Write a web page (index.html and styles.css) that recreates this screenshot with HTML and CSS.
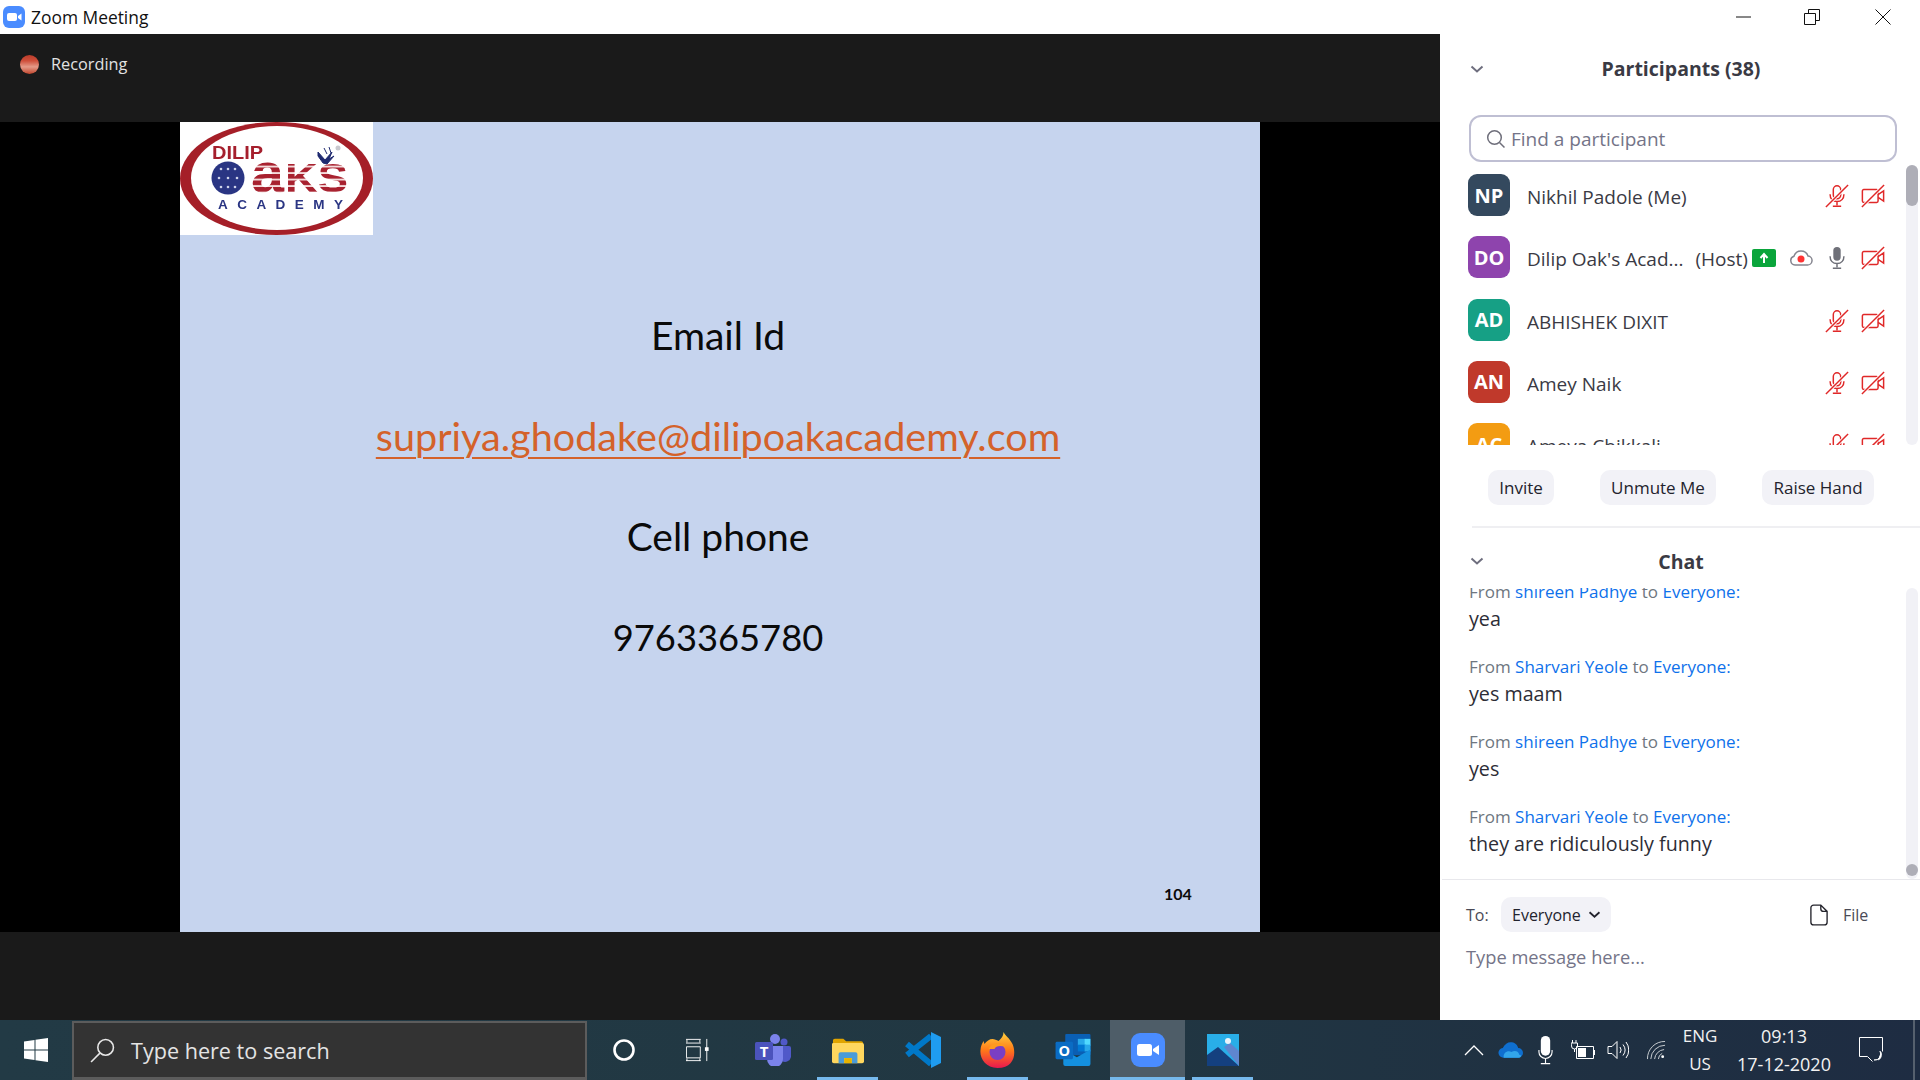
FILE: index.html
```html
<!DOCTYPE html>
<html lang="en">
<head>
<meta charset="utf-8">
<title>Zoom Meeting</title>
<link rel="stylesheet" href="styles.css">
</head>
<body>
<svg class="sprite" width="0" height="0" aria-hidden="true">
  <symbol id="mic-off" viewBox="0 0 26 26">
    <rect x="9" y="2" width="8" height="14" rx="4" fill="none" stroke="currentColor" stroke-width="1.6"/>
    <path d="M5.5 11c0 5 3 8 7.500 8s7.500-3 7.500-8M13 19v4M8.500 24h9" fill="none" stroke="currentColor" stroke-width="1.600"/>
    <path d="M1 25L25 1" stroke="#fff" stroke-width="3.500"/>
    <path d="M1 25L25 1" stroke="currentColor" stroke-width="1.600"/>
  </symbol>
  <symbol id="cam-off" viewBox="0 0 26 26">
    <path d="M3 6h14a1.500 1.500 0 0 1 1.500 1.500v11A1.500 1.500 0 0 1 17 20H3a1.500 1.500 0 0 1-1.500-1.500v-11A1.500 1.500 0 0 1 3 6z" fill="none" stroke="currentColor" stroke-width="1.600"/>
    <path d="M18.500 11.500l6-4v11l-6-4" fill="none" stroke="currentColor" stroke-width="1.600"/>
    <path d="M1 25L25 1" stroke="#fff" stroke-width="3.500"/>
    <path d="M1 25L25 1" stroke="currentColor" stroke-width="1.600"/>
  </symbol>
  <symbol id="chev" viewBox="0 0 14 10">
    <path d="M1.500 2.500L7 7.500l5.500-5" fill="none" stroke="currentColor" stroke-width="2"/>
  </symbol>
</svg>

<header class="titlebar">
  <svg class="app-icon" viewBox="0 0 22 22"><rect width="22" height="22" rx="6" fill="#4a8cff"/><rect x="4" y="7" width="10" height="8" rx="2" fill="#fff"/><path d="M15 10l3.500-2.500v7L15 12z" fill="#fff"/></svg>
  <span class="app-title">Zoom Meeting</span>
  <div class="win-controls">
    <svg class="win-btn" viewBox="0 0 16 16"><path d="M0 8h15" stroke="#111" fill="none"/></svg>
    <svg class="win-btn win-restore" viewBox="0 0 16 16"><path d="M.500 4.500h11v11H.500zM4.500 4V.500h11v11H12" stroke="#111" fill="none"/></svg>
    <svg class="win-btn" viewBox="0 0 16 16"><path d="M.500.500l15 15M15.500.500l-15 15" stroke="#111" fill="none"/></svg>
  </div>
</header>

<main class="app">
  <section class="stage">
    <div class="stage-top">
      <span class="rec-dot"></span>
      <span class="rec-label">Recording</span>
    </div>
    <div class="screen">
      <div class="slide">
        <svg class="logo" viewBox="0 0 193 113">
          <defs>
            <pattern id="stripes" width="10" height="6.500" patternUnits="userSpaceOnUse">
              <rect width="10" height="6.500" fill="#a8212f"/>
              <rect y="4.600" width="10" height="1.900" fill="#f4dcdc"/>
            </pattern>
          </defs>
          <rect width="193" height="113" fill="#fff"/>
          <ellipse cx="96.500" cy="56.500" rx="96.500" ry="56.500" fill="#a51f28"/>
          <ellipse cx="97" cy="56" rx="86" ry="52" fill="#fff"/>
          <text x="32" y="37" class="logo-dilip" textLength="51" lengthAdjust="spacingAndGlyphs">DILIP</text>
          <circle cx="48" cy="56" r="16.500" fill="#2a3583"/>
          <g fill="#cfd3ea">
            <circle cx="41" cy="47" r="1.300"/><circle cx="48" cy="47" r="1.300"/><circle cx="55" cy="47" r="1.300"/>
            <circle cx="39" cy="56" r="1.300"/><circle cx="48" cy="56" r="1.300"/><circle cx="57" cy="56" r="1.300"/>
            <circle cx="41" cy="65" r="1.300"/><circle cx="48" cy="65" r="1.300"/><circle cx="55" cy="65" r="1.300"/>
          </g>
          <text x="71" y="70" class="logo-a" textLength="33" lengthAdjust="spacingAndGlyphs">a</text>
          <text x="105" y="70" class="logo-ks" textLength="63" lengthAdjust="spacingAndGlyphs">KS</text>
          <path d="M138 30l7 8 7-8-3 7 5-3-7 8-4-1-5-7zM144 26l3 6M149 25l2 6" fill="#1f2a70" stroke="#1f2a70"/>
          <circle cx="158" cy="26" r="2.500" fill="#c9c9cf"/>
          <text x="38" y="86.500" class="logo-academy" textLength="125">ACADEMY</text>
        </svg>
        <p class="slide-line">Email Id</p>
        <p class="slide-line slide-link">supriya.ghodake@dilipoakacademy.com</p>
        <p class="slide-line">Cell phone</p>
        <p class="slide-line slide-num">9763365780</p>
        <span class="slide-no">104</span>
      </div>
    </div>
    <div class="stage-bottom"></div>
  </section>

  <aside class="panel">
    <div class="panel-head participants-head">
      <svg class="chev"><use href="#chev"/></svg>
      <span class="panel-title">Participants (38)</span>
    </div>
    <div class="search">
      <svg class="search-icon" viewBox="0 0 20 20"><circle cx="8.500" cy="8.500" r="6.800" fill="none" stroke="#6e6e7a" stroke-width="1.500"/><path d="M13.500 13.500l5 5" stroke="#6e6e7a" stroke-width="1.500"/></svg>
      <span class="search-text">Find a participant</span>
    </div>
    <div class="list">
      <div class="rows">
        <div class="row">
          <span class="avatar av-np">NP</span><span class="name">Nikhil Padole (Me)</span>
          <span class="row-icons"><svg class="ico red"><use href="#mic-off"/></svg><svg class="ico red"><use href="#cam-off"/></svg></span>
        </div>
        <div class="row">
          <span class="avatar av-do">DO</span><span class="name">Dilip Oak's Acad...<span class="host">(Host)</span></span>
          <span class="row-icons">
            <svg class="share" viewBox="0 0 24 18"><rect width="24" height="18" rx="2" fill="#0aa53b"/><path d="M12 14V6M8.500 9L12 5l3.500 4" fill="none" stroke="#fff" stroke-width="2"/></svg>
            <svg class="cloud" viewBox="0 0 24 16"><path d="M6 15a4.500 4.500 0 0 1-1-8.800C6 3 9 1 12 1c3.500 0 6 2 7 5a4.500 4.500 0 0 1-1 9z" fill="none" stroke="#85858f" stroke-width="1.500"/><circle cx="12" cy="9" r="3.500" fill="#f33"/></svg>
            <svg class="ico grey" viewBox="0 0 26 26"><rect x="9" y="1" width="8" height="15" rx="4" fill="currentColor"/><path d="M5.500 11c0 5 3 8 7.500 8s7.500-3 7.500-8M13 19v4M8.500 24h9" fill="none" stroke="currentColor" stroke-width="1.600"/></svg>
            <svg class="ico red"><use href="#cam-off"/></svg>
          </span>
        </div>
        <div class="row">
          <span class="avatar av-ad">AD</span><span class="name">ABHISHEK DIXIT</span>
          <span class="row-icons"><svg class="ico red"><use href="#mic-off"/></svg><svg class="ico red"><use href="#cam-off"/></svg></span>
        </div>
        <div class="row">
          <span class="avatar av-an">AN</span><span class="name">Amey Naik</span>
          <span class="row-icons"><svg class="ico red"><use href="#mic-off"/></svg><svg class="ico red"><use href="#cam-off"/></svg></span>
        </div>
        <div class="row">
          <span class="avatar av-ac">AC</span><span class="name">Ameya Chikkali</span>
          <span class="row-icons"><svg class="ico red"><use href="#mic-off"/></svg><svg class="ico red"><use href="#cam-off"/></svg></span>
        </div>
      </div>
      <div class="track"><div class="thumb thumb-list"></div></div>
    </div>
    <div class="actions">
      <button class="btn btn-invite">Invite</button>
      <button class="btn btn-unmute">Unmute Me</button>
      <button class="btn btn-raise">Raise Hand</button>
    </div>
    <div class="divider"></div>
    <div class="panel-head chat-head">
      <svg class="chev"><use href="#chev"/></svg>
      <span class="panel-title">Chat</span>
    </div>
    <div class="chat">
      <div class="messages">
        <div class="msg"><div class="from">From <a>shireen Padhye</a> to <a>Everyone:</a></div><div class="body">yea</div></div>
        <div class="msg"><div class="from">From <a>Sharvari Yeole</a> to <a>Everyone:</a></div><div class="body">yes maam</div></div>
        <div class="msg"><div class="from">From <a>shireen Padhye</a> to <a>Everyone:</a></div><div class="body">yes</div></div>
        <div class="msg"><div class="from">From <a>Sharvari Yeole</a> to <a>Everyone:</a></div><div class="body">they are ridiculously funny</div></div>
      </div>
      <div class="track"><div class="thumb thumb-chat"></div></div>
    </div>
    <div class="divider-full"></div>
    <div class="compose">
      <div class="to-row">
        <span class="to">To:</span>
        <span class="pill">Everyone<svg class="pill-chev"><use href="#chev"/></svg></span>
        <span class="file">
          <svg class="file-icon" viewBox="0 0 20 24"><path d="M4 1h8l7 7v12a3 3 0 0 1-3 3H4a3 3 0 0 1-3-3V4a3 3 0 0 1 3-3zM12 1v4a3 3 0 0 0 3 3h4" fill="none" stroke="#24242c" stroke-width="1.500"/></svg>
          File
        </span>
      </div>
      <div class="type">Type message here...</div>
    </div>
  </aside>
</main>

<footer class="taskbar">
  <div class="start">
    <svg class="win-logo" viewBox="0 0 24 24"><path d="M0 3.500l10.500-1.500v9.500H0zM11.500 1.800L24 0v11.500H11.500zM0 12.500h10.500V22L0 20.500zM11.500 12.500H24V24l-12.500-1.800z" fill="#fff"/></svg>
  </div>
  <div class="tb-search">
    <svg class="tb-search-icon" viewBox="0 0 24 24"><circle cx="15" cy="9" r="7.500" fill="none" stroke="#e8e8e8" stroke-width="1.500"/><path d="M9.500 14.500L1 23" stroke="#e8e8e8" stroke-width="1.500"/></svg>
    <span class="tb-search-text">Type here to search</span>
  </div>
  <div class="tb-apps">
    <div class="tb-app tb-cortana"><svg viewBox="0 0 24 24" class="tb-i"><circle cx="12" cy="12" r="9.500" fill="none" stroke="#fff" stroke-width="2.600"/></svg></div>
    <div class="tb-app"><svg viewBox="0 0 26 24" class="tb-i"><path d="M0 .500h16M0 4.500h16M1 4V1M15 4V1M.500 8.500h15v12H.500zM0 23.500h16M1 24v-3M15 24v-3M22.500 0v24" fill="none" stroke="#fff"/><rect x="20.500" y="9" width="4" height="4" fill="#fff"/></svg></div>
    <div class="tb-app"><svg viewBox="0 0 36 32" class="tb-l">
      <circle cx="29" cy="8" r="3.500" fill="#5059c9"/><path d="M24 12h10a2 2 0 0 1 2 2v9a6 6 0 0 1-9 4z" fill="#5059c9"/>
      <circle cx="20" cy="5" r="5" fill="#7b83eb"/><path d="M12 12h16v13a8 8 0 0 1-16 0z" fill="#7b83eb"/>
      <rect x="0" y="8" width="18" height="18" rx="1.500" fill="#4b53bc"/><text x="9" y="23" class="tb-letter" text-anchor="middle">T</text>
    </svg></div>
    <div class="tb-app tb-open"><svg viewBox="0 0 34 32" class="tb-folder" preserveAspectRatio="none">
      <path d="M1 4a2 2 0 0 1 2-2h9l3 3h16a2 2 0 0 1 2 2v3H1z" fill="#e0a400"/>
      <path d="M1 7h31a2 2 0 0 1 2 2v20a2 2 0 0 1-2 2H2a2 2 0 0 1-2-2V8z" fill="#ffd75e"/>
      <path d="M7 31V20a2 2 0 0 1 2-2h16a2 2 0 0 1 2 2v11h-6v-6h-8v6z" fill="#4a9bd8"/>
      <rect x="13" y="25" width="8" height="6" fill="#e8b300"/>
    </svg></div>
    <div class="tb-app"><svg viewBox="0 0 37 36" class="tb-xl">
      <path d="M27 4L3 23M3 12l24 20" fill="none" stroke="#0078c8" stroke-width="6"/>
      <path d="M27 0l10 5v26l-10 5z" fill="#1f9cf0"/>
    </svg></div>
    <div class="tb-app tb-open"><svg viewBox="0 0 36 36" class="tb-xl">
      <defs>
        <linearGradient id="fx" x1="0" y1="0" x2="0" y2="1"><stop offset="0" stop-color="#ffd23f"/><stop offset=".5" stop-color="#ff7a18"/><stop offset="1" stop-color="#e8174f"/></linearGradient>
      </defs>
      <path d="M24 0c2 4 6 6 9 12 4 9 2 24-15 24C6 36 0 26 1 18c0-4 2-7 3-9l1 3c2-3 5-5 8-5 2 0 4 1 6 2 3-3 5-5 5-9z" fill="url(#fx)"/>
      <circle cx="18" cy="20" r="8" fill="#7a3fc4"/>
      <path d="M9 17c3-6 12-9 17-2-5-2-10-1-11 2-3 0-4 0-6 0z" fill="#ff9a1f"/>
    </svg></div>
    <div class="tb-app"><svg viewBox="0 0 36 33" class="tb-l">
      <rect x="10" y="0" width="26" height="22" rx="1" fill="#0a5fb4"/>
      <rect x="23" y="5" width="8" height="7" fill="#28a8ea"/><rect x="30" y="5" width="6" height="7" fill="#50d9ff"/>
      <rect x="23" y="11" width="8" height="7" fill="#0078d4"/><rect x="30" y="11" width="6" height="7" fill="#28a8ea"/>
      <path d="M8 16l14 8 14-8v15a2 2 0 0 1-2 2H10a2 2 0 0 1-2-2z" fill="#1490df"/>
      <rect x="0" y="8" width="18" height="18" rx="1.500" fill="#0a6cc4"/><text x="9" y="22.500" class="tb-letter" text-anchor="middle">O</text>
    </svg></div>
    <div class="tb-app tb-active"><svg viewBox="0 0 34 34" class="tb-z"><rect width="34" height="34" rx="9" fill="#4a8cff"/><rect x="6" y="11" width="15" height="12" rx="2.500" fill="#fff"/><path d="M22 16l6-4v10l-6-4z" fill="#fff"/></svg></div>
    <div class="tb-app tb-open"><svg viewBox="0 0 32 32" class="tb-l">
      <rect width="32" height="32" fill="#29aee8"/>
      <path d="M0 32V21l11-8 21 19z" fill="#14407f"/>
      <path d="M17 13l6-4 9 8v15z" fill="#5f86cf"/>
      <circle cx="21" cy="7" r="3" fill="#eaf4fb"/>
    </svg></div>
  </div>
  <div class="tray">
    <svg class="tr tr-chev" viewBox="0 0 20 12"><path d="M1 11l9-9 9 9" fill="none" stroke="#fff" stroke-width="1.300"/></svg>
    <svg class="tr tr-cloud" viewBox="0 0 26 16"><path d="M6 16a5 5 0 0 1-1-10C7 2 10 0 13 0c4 0 7 2 8 6a5 5 0 0 1 0 10z" fill="#0f6fcf"/><path d="M6 16c-1-5 4-8 8-6 3-2 8-1 8 3 3 0 2 3 0 3z" fill="#32a5ea"/></svg>
    <svg class="tr tr-mic" viewBox="0 0 16 30"><rect x="3" y="0" width="10" height="21" rx="5" fill="#fff"/><path d="M1 15v2a7 7 0 0 0 14 0v-2M8 24v5M3 29.500h10" fill="none" stroke="#fff" stroke-width="1.200"/></svg>
    <svg class="tr tr-batt" viewBox="0 0 24 20"><path d="M5.500 6.500h17v12h-17z" fill="none" stroke="#fff"/><rect x="22.500" y="10" width="1.500" height="5" fill="#fff"/><rect x="7" y="8" width="8" height="9" fill="#fff"/><path d="M1.500 0v3M5 0v3M0 3h6.500v3a3 3 0 0 1-6 0zM3.500 9v3" fill="none" stroke="#fff"/></svg>
    <svg class="tr tr-vol" viewBox="0 0 22 20"><path d="M1 6.500h4l5-5v17l-5-5H1z" fill="none" stroke="#fff"/><path d="M13 7a5 5 0 0 1 0 6M16 4.500a9 9 0 0 1 0 11M19 2a13 13 0 0 1 0 16" fill="none" stroke="#fff"/></svg>
    <svg class="tr tr-wifi" viewBox="0 0 20 20"><path d="M.500 19A18 18 0 0 1 19 .500M4 19A15 15 0 0 1 19 4.500M8 19A11 11 0 0 1 18 9M12 19A7 7 0 0 1 16 13" fill="none" stroke="#cfd3d6" stroke-width="1"/><rect x="15" y="15" width="3" height="3" rx="1.500" fill="#fff"/></svg>
    <div class="lang"><span>ENG</span><span>US</span></div>
    <div class="clock"><span>09:13</span><span>17-12-2020</span></div>
    <svg class="tr tr-note" viewBox="0 0 24 26"><path d="M.500 .500h23v14M.500 .500v19h8l5 5" fill="none" stroke="#fff"/><path d="M21 14a6 6 0 0 1-6 9 6 6 0 0 0 6-9z M22 15c1 4 0 7-3 8" fill="#fff" stroke="#fff" stroke-width=".8"/></svg>
    <span class="show-desktop"></span>
  </div>
</footer>
</body>
</html>
```

FILE: styles.css
```css
* { box-sizing: border-box; }
html, body { margin: 0; padding: 0; }
body { width: 1920px; height: 1080px; overflow: hidden; display: flex; flex-direction: column; font-family: "Open Sans", "Noto Sans", sans-serif; background: #fff; color: #2d2d36; }
.sprite { position: absolute; }
p { margin: 0; }

/* title bar */
.titlebar { height: 34px; flex: none; display: flex; align-items: center; background: #fff; padding-left: 3px; }
.app-icon { width: 22px; height: 22px; }
.app-title { margin-left: 6px; font-size: 17.400px; color: #111; }
.win-controls { margin-left: auto; display: flex; align-items: center; padding-right: 29px; height: 34px; }
.win-btn { width: 16px; height: 16px; margin-top: -1px; }
.win-restore { margin-left: 52px; margin-right: 55px; }

.app { flex: 1; display: flex; min-height: 0; }

/* stage */
.stage { width: 1440px; display: flex; flex-direction: column; background: #1a1a1a; }
.stage-top { height: 88px; flex: none; display: flex; align-items: flex-start; padding: 21px 0 0 20px; }
.rec-dot { width: 19px; height: 19px; border-radius: 50%; background: linear-gradient(#b93c2a 0%, #cf4e3a 30%, #e59a88 62%, #c0452c 100%); filter: blur(.6px); }
.rec-label { margin-left: 12px; font-size: 16.300px; line-height: 19px; color: #e2e2e2; }
.screen { height: 810px; flex: none; background: #000; display: flex; justify-content: center; }
.slide { position: relative; width: 1080px; background: #c6d4ee; padding: 163px 4px 0 0; text-align: center; font-family: Lato, "Open Sans", sans-serif; color: #0a0a0a; }
.slide-line { font-size: 39px; line-height: 100.500px; }
.slide-link { font-size: 39.600px; color: #d4622a; text-decoration: underline; text-decoration-thickness: 2px; text-underline-offset: 6px; }
.slide-num { font-size: 36.300px; }
.slide-no { position: absolute; left: 984px; top: 762px; font-size: 16px; font-weight: 700; line-height: 20px; }
.logo { position: absolute; left: 0; top: 0; width: 193px; height: 113px; filter: blur(.4px); }
.logo-dilip { font: 700 18px "Liberation Sans", sans-serif; fill: #a51f2d; }
.logo-a { font: 700 56px "Liberation Sans", sans-serif; fill: url(#stripes); }
.logo-ks { font: 700 41px "Liberation Sans", sans-serif; fill: url(#stripes); }
.logo-academy { font: 700 13.500px "Liberation Sans", sans-serif; fill: #2a3583; }
.stage-bottom { flex: 1; }

/* panel */
.panel { width: 480px; flex: none; display: flex; flex-direction: column; background: #fff; }
.panel-head { position: relative; display: flex; align-items: center; justify-content: center; flex: none; }
.participants-head { height: 81px; padding: 0 0 13px 2px; }
.chat-head { height: 60px; padding: 6px 0 0 2px; }
.panel-title { font-size: 19.500px; font-weight: 700; color: #3a3a44; }
.chev { position: absolute; left: 30px; top: 50%; width: 14px; height: 10px; color: #6e6e7e; }
.participants-head .chev { margin-top: -11px; }
.chat-head .chev { margin-top: -2px; }

.search { flex: none; height: 47px; margin: 0 23px 0 29px; border: 2px solid #bfbfd3; border-radius: 12px; display: flex; align-items: center; padding-left: 15px; }
.search-icon { width: 20px; height: 20px; }
.search-text { margin-left: 5px; padding-top: 1px; font-size: 19px; color: #747488; }

.list { flex: none; height: 280px; margin-top: 3px; display: flex; }
.rows { flex: 1; overflow: hidden; padding-left: 28px; }
.row { height: 62.250px; padding-top: 9px; display: flex; align-items: flex-start; }
.avatar { width: 42px; height: 42px; border-radius: 9px; flex: none; display: flex; align-items: center; justify-content: center; color: #fff; font-size: 20px; font-weight: 700; }
.av-np { background: #34495e; }
.av-do { background: #8e44ad; }
.av-ad { background: #16a085; }
.av-an { background: #c0392b; }
.av-ac { background: #f39c12; }
.name { margin-left: 17px; padding-top: 2px; font-size: 19px; line-height: 42px; color: #3a3a44; white-space: nowrap; }
.host { margin-left: 12px; }
.row-icons { margin-left: auto; margin-right: 21px; height: 44px; display: flex; align-items: center; gap: 12px; flex: none; }
.ico { width: 24px; height: 24px; }
.red { color: #e02828; }
.grey { color: #6f7079; }
.share { width: 24px; height: 18px; margin-right: 1px; }
.cloud { width: 24px; height: 16px; }
.track { width: 12px; flex: none; margin-right: 2px; background: #f1f1f6; border-radius: 6px; position: relative; }
.thumb { width: 12px; background: #aeaeb7; border-radius: 6px; }
.thumb-list { height: 41px; }
.thumb-chat { position: absolute; left: 0; bottom: 3px; height: 12px; }

.actions { flex: none; height: 81px; padding: 25px 0 0 48px; display: flex; align-items: flex-start; gap: 46px; }
.btn { height: 35px; padding: 0; border: 0; border-radius: 10px; background: #f2f2f7; font: 17px "Open Sans", sans-serif; color: #23232d; }
.btn-invite { width: 66px; }
.btn-unmute { width: 116px; }
.btn-raise { width: 112px; }
.divider { flex: none; height: 2px; margin-left: 32px; background: #efeff2; }

.chat { flex: none; height: 291px; display: flex; }
.messages { flex: 1; min-width: 0; overflow: hidden; padding: 0 0 0 29px; display: flex; flex-direction: column; justify-content: flex-end; }
.msg { flex: none; height: 75px; padding-top: 1px; }
.from { font-size: 17px; line-height: 24px; color: #6e7680; white-space: nowrap; }
.from a { color: #0e71eb; }
.body { font-size: 19.700px; line-height: 30px; color: #2d2d36; }
.chat .track { height: 291px; }
.divider-full { flex: none; height: 1px; margin-left: 2px; background: #e8e8ec; }

.compose { flex: 1; padding: 17px 0 0 26px; }
.to-row { display: flex; align-items: center; height: 35px; }
.to { font-size: 16px; color: #4a4a56; width: 35px; }
.pill { width: 110px; height: 35px; border-radius: 10px; background: #f2f2f7; display: flex; align-items: center; padding-left: 11px; font-size: 16px; color: #23232d; }
.pill-chev { width: 13px; height: 9px; margin-left: 7px; color: #23232d; }
.file { margin-left: 199px; display: flex; align-items: center; font-size: 16px; color: #4a4a56; }
.file-icon { width: 18px; height: 22px; margin-right: 15px; }
.type { margin-top: 8px; font-size: 18.300px; line-height: 34px; color: #747488; }

/* taskbar */
.taskbar { height: 60px; flex: none; display: flex; background: linear-gradient(90deg, #223a45 0%, #213742 55%, #1e2c42 100%); color: #fff; }
.start { width: 72px; flex: none; display: flex; align-items: center; justify-content: center; }
.win-logo { width: 24px; height: 24px; }
.tb-search { width: 515px; flex: none; margin-top: 1px; background: #333; border: 2px solid #5c5c5c; border-bottom-width: 3px; display: flex; align-items: center; padding-left: 16px; }
.tb-search-icon { width: 25px; height: 25px; }
.tb-search-text { margin-left: 16px; font-size: 21.600px; color: #e4e4e4; }
.tb-apps { display: flex; margin-left: 0; }
.tb-app { position: relative; width: 75px; height: 60px; display: flex; align-items: center; justify-content: center; }
.tb-cortana { width: 73px; }
.tb-i { width: 24px; height: 24px; }
.tb-l { width: 36px; height: 32px; }
.tb-xl { width: 37px; height: 36px; }
.tb-folder { width: 32px; height: 27px; }
.tb-z { width: 34px; height: 34px; }
.tb-letter { font: 700 15px "Open Sans", sans-serif; fill: #fff; }
.tb-open::after { content: ""; position: absolute; left: 7px; right: 7px; bottom: 0; height: 3px; background: #76b9ed; }
.tb-active { background: #4e5d68; }
.tb-active::after { content: ""; position: absolute; left: 0; right: 0; bottom: 0; height: 3px; background: #76b9ed; }

.tray { flex: 1; display: flex; align-items: center; position: relative; padding-left: 204px; }
.tr { flex: none; }
.tr-chev { width: 20px; height: 12px; margin-right: 14px; }
.tr-cloud { width: 25px; height: 16px; margin-right: 15px; }
.tr-mic { width: 15px; height: 30px; margin-right: 18px; }
.tr-batt { width: 24px; height: 20px; margin-right: 12px; }
.tr-vol { width: 22px; height: 20px; margin-right: 18px; }
.tr-wifi { width: 19px; height: 19px; margin-right: 15px; }
.lang, .clock { display: flex; flex-direction: column; align-items: center; line-height: 28px; color: #f2f2f2; }
.lang { width: 38px; font-size: 17px; }
.clock { width: 100px; margin-left: 15px; font-size: 18px; }
.tr-note { width: 24px; height: 26px; margin-left: 25px; }
.show-desktop { position: absolute; right: 5px; top: 0; width: 2px; height: 60px; background: #55606e; }
```
